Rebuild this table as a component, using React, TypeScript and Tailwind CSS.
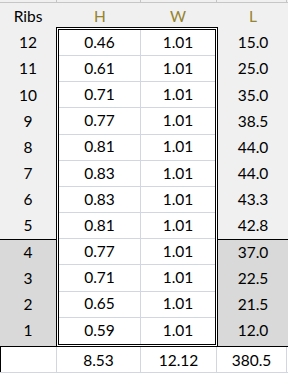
const rows = [
  { n: 12, h: "0.46", w: "1.01", l: "15.0" },
  { n: 11, h: "0.61", w: "1.01", l: "25.0" },
  { n: 10, h: "0.71", w: "1.01", l: "35.0" },
  { n: 9, h: "0.77", w: "1.01", l: "38.5" },
  { n: 8, h: "0.81", w: "1.01", l: "44.0" },
  { n: 7, h: "0.83", w: "1.01", l: "44.0" },
  { n: 6, h: "0.83", w: "1.01", l: "43.3" },
  { n: 5, h: "0.81", w: "1.01", l: "42.8" },
  { n: 4, h: "0.77", w: "1.01", l: "37.0" },
  { n: 3, h: "0.71", w: "1.01", l: "22.5" },
  { n: 2, h: "0.65", w: "1.01", l: "21.5" },
  { n: 1, h: "0.59", w: "1.01", l: "12.0" },
]

function SideCell({ text, index }: { text: string; index: number }) {
  const dark = index >= 8
  const last = index === rows.length - 1
  return (
    <div
      className={`flex items-center justify-center ${dark ? "bg-[#d9d9d9]" : "bg-[#f0f0f0]"} ${
        index === 8 ? "border-t border-black" : ""
      } ${last ? "h-[29.1667px] border-b border-black pb-[3px]" : "h-[26.1667px]"}`}
    >
      {text}
    </div>
  )
}

export default function App() {
  return (
    <div className="w-[288px] h-[376px] overflow-hidden bg-white text-[15.5px] leading-none text-black font-['Lato',sans-serif]">
      <div className="flex h-[3px] border-b border-[#c6c6c6] bg-[#f0f0f0]">
        <div className="w-[57px] border-r border-[#c6c6c6]" />
        <div className="w-[84px] border-r border-[#c6c6c6]" />
        <div className="w-[76px] border-r border-[#c6c6c6]" />
        <div className="w-[70px] border-r border-[#c6c6c6]" />
      </div>

      <div className="flex h-[344px] bg-[#f0f0f0]">
        <div className="w-[56px] flex flex-col">
          <div className="h-[27px] flex items-center justify-center pt-[1px]">Ribs</div>
          {rows.map((r, i) => (
            <SideCell key={r.n} text={String(r.n)} index={i} />
          ))}
        </div>

        <div className="w-[162px] flex flex-col">
          <div className="h-[24px] flex px-[3px] text-[#96842e] pt-[4px]">
            <div className="w-[82px] flex items-center justify-center">H</div>
            <div className="w-[74px] flex items-center justify-center">W</div>
          </div>
          <div className="h-[320px] border-[3px] border-double border-black bg-white flex flex-col">
            {rows.map((r, i) => (
              <div
                key={r.n}
                className={`flex h-[26.1667px] ${i < rows.length - 1 ? "border-b border-[#d0d7e3]" : ""}`}
              >
                <div className="w-[82px] flex items-center justify-center border-r border-[#d0d7e3]">{r.h}</div>
                <div className="w-[74px] flex items-center justify-center">{r.w}</div>
              </div>
            ))}
          </div>
        </div>

        <div className="w-[70px] flex flex-col">
          <div className="h-[27px] flex items-center justify-center pt-[1px] text-[#96842e]">L</div>
          {rows.map((r, i) => (
            <SideCell key={r.n} text={r.l} index={i} />
          ))}
        </div>
      </div>

      <div className="flex h-[26px] border-b border-[#d0d7e3]">
        <div className="w-[57px] border-l border-black border-r border-r-[#d0d7e3]" />
        <div className="w-[84px] flex items-center justify-center pt-[2px] border-r border-[#d0d7e3]">8.53</div>
        <div className="w-[76px] flex items-center justify-center pt-[2px] border-r border-[#d0d7e3]">12.12</div>
        <div className="w-[70px] flex items-center justify-center pt-[2px] border-r border-[#d0d7e3]">380.5</div>
      </div>
    </div>
  )
}
